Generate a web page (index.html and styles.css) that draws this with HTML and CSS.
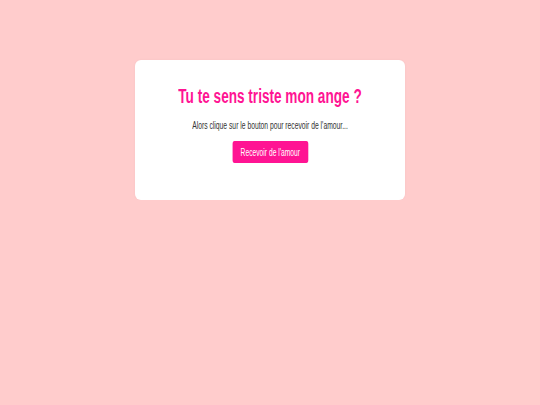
FILE: index.html
```html
<!DOCTYPE html>
<html lang="fr">
<head>
  <meta charset="UTF-8">
  <title>Pour toi</title>
  <link rel="stylesheet" href="styles.css">
</head>
<body>

  <div class="card">
    <h1>Tu te sens triste mon ange ?</h1>
    <p>Alors clique sur le bouton pour recevoir de l'amour...</p>
    <button>Recevoir de l'amour</button>
  </div>

</body>
</html>
```

FILE: styles.css
```css
body {
  margin: 0;
  background-color: #ffcccc;
  font-family: "Liberation Sans", Arial, sans-serif;
  text-align: center;
}

.card {
  width: 270px;
  box-sizing: border-box;
  margin: 60px auto 0;
  padding: 25px 0 37px;
  background-color: #fff;
  border-radius: 6px;
  box-shadow: 0 0 3px rgba(0, 0, 0, 0.04);
}

/* the text in the shot is drawn narrow, so squeeze it sideways */
h1 {
  font-size: 20px;
  color: #ff1493;
  margin: 0 0 11px;
  white-space: nowrap;
  transform: scaleX(0.68);
}

p {
  font-size: 11px;
  color: #333;
  margin: 0 0 10px;
  white-space: nowrap;
  transform: scaleX(0.614);
}

button {
  display: block;
  margin: 0 auto;
  height: 22px;
  padding: 0 12px;
  font-family: inherit;
  font-size: 10px;
  border: none;
  border-radius: 3px;
  background-color: #ff1493;
  color: #fff;
  cursor: pointer;
  transform: scaleX(0.67);
}
```
